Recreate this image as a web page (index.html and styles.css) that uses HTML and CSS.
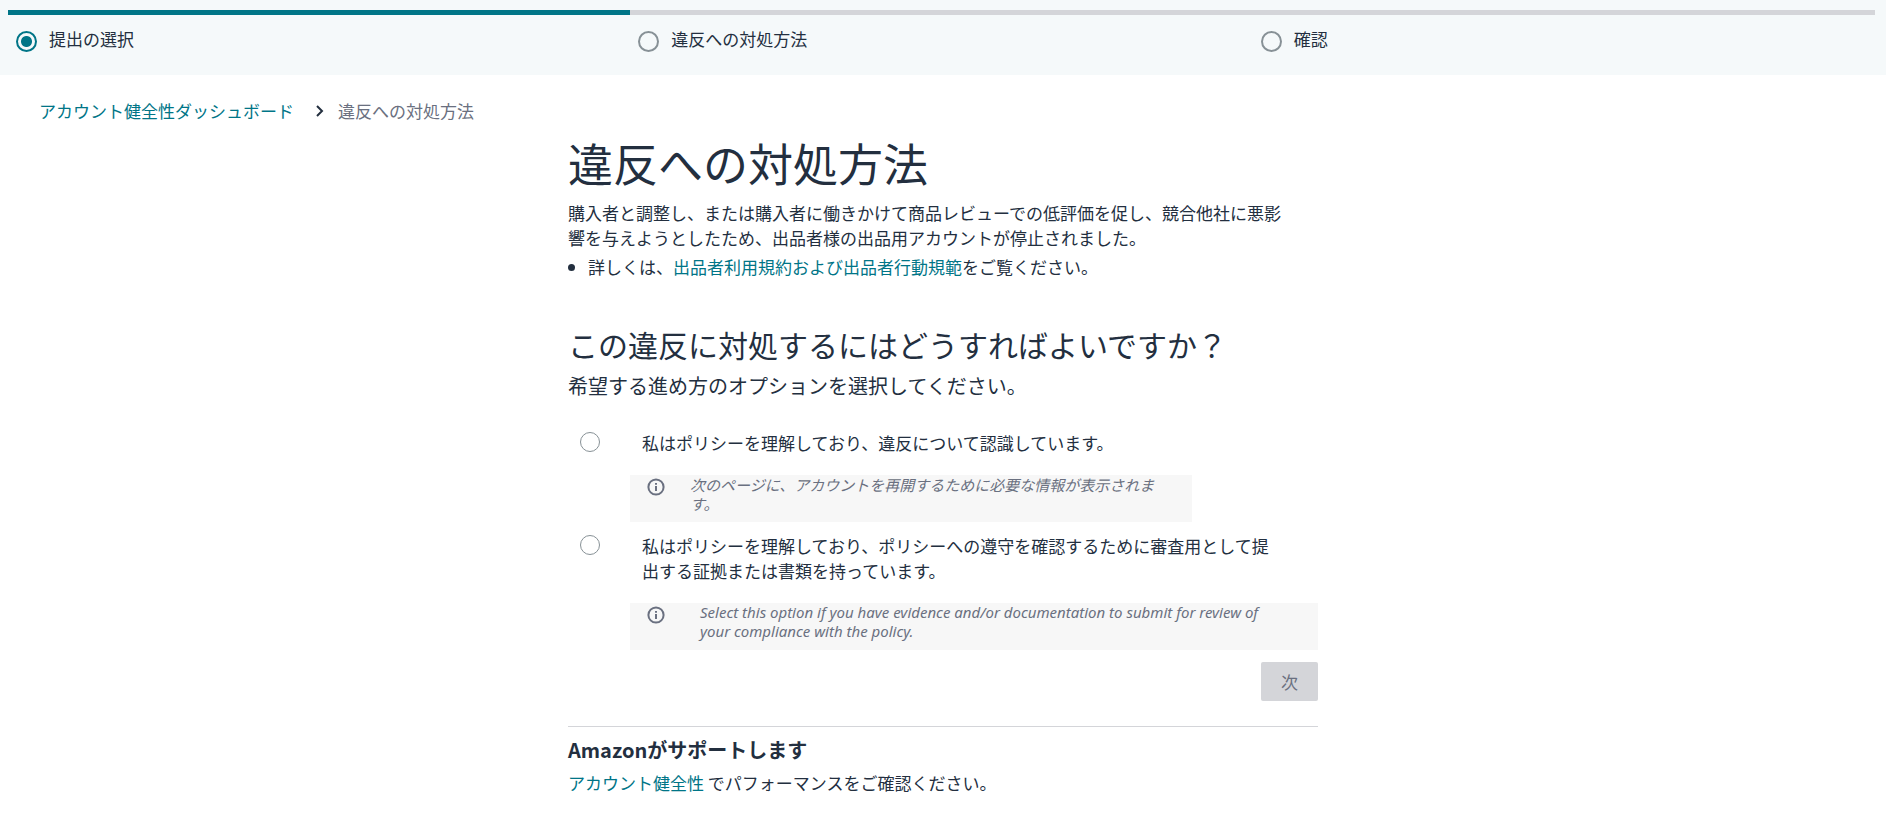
FILE: index.html
```
<!DOCTYPE html>
<html lang="ja">
<head>
<meta charset="utf-8">
<title>違反への対処方法</title>
<link rel="stylesheet" href="styles.css">
</head>
<body>
<header class="progress">
  <ol class="steps">
    <li class="step step-active"><span class="step-dot"></span><span>提出の選択</span></li>
    <li class="step"><span class="step-dot"></span><span>違反への対処方法</span></li>
    <li class="step"><span class="step-dot"></span><span>確認</span></li>
  </ol>
</header>
<nav class="breadcrumb" aria-label="breadcrumb">
  <a href="#">アカウント健全性ダッシュボード</a>
  <svg class="chevron" viewBox="0 0 10 14" aria-hidden="true"><path d="M2 2l5 5-5 5"/></svg>
  <span class="current">違反への対処方法</span>
</nav>
<main class="content">
  <h1>違反への対処方法</h1>
  <p class="reason">購入者と調整し、または購入者に働きかけて商品レビューでの低評価を促し、競合他社に悪影響を与えようとしたため、出品者様の出品用アカウントが停止されました。</p>
  <ul class="details">
    <li>詳しくは、<a href="#">出品者利用規約および出品者行動規範</a>をご覧ください。</li>
  </ul>
  <h2>この違反に対処するにはどうすればよいですか？</h2>
  <p class="lead">希望する進め方のオプションを選択してください。</p>
  <form class="options">
    <div class="option">
      <input class="radio" type="radio" name="plan" id="plan-ack">
      <label for="plan-ack">私はポリシーを理解しており、違反について認識しています。</label>
    </div>
    <div class="note note-short">
      <svg class="info" viewBox="0 0 18 18" aria-hidden="true"><circle cx="9" cy="9" r="7.6"/><path d="M9 8v5M9 5v1.7"/></svg>
      <p>次のページに、アカウントを再開するために必要な情報が表示されます。</p>
    </div>
    <div class="option">
      <input class="radio" type="radio" name="plan" id="plan-evidence">
      <label for="plan-evidence">私はポリシーを理解しており、ポリシーへの遵守を確認するために審査用として提出する証拠または書類を持っています。</label>
    </div>
    <div class="note note-wide">
      <svg class="info" viewBox="0 0 18 18" aria-hidden="true"><circle cx="9" cy="9" r="7.6"/><path d="M9 8v5M9 5v1.7"/></svg>
      <p lang="en">Select this option if you have evidence and/or documentation to submit for review of your compliance with the policy.</p>
    </div>
    <div class="actions"><button type="submit" class="next" disabled>次</button></div>
  </form>
  <footer class="support">
    <h3>Amazonがサポートします</h3>
    <p><a href="#">アカウント健全性</a> でパフォーマンスをご確認ください。</p>
  </footer>
</main>
</body>
</html>
```
FILE: styles.css
```
* { box-sizing: border-box; }
body {
  margin: 0;
  background: #fff;
  color: #232f3f;
  font: 17px/25px "Noto Sans CJK JP", sans-serif;
}
h1, h2, h3, p, ul, ol { margin: 0; padding: 0; font-weight: 400; }
a { color: #007587; text-decoration: none; }

.progress { padding: 10px 11px 23px 8px; background: #f5f9fa; }
.steps { display: grid; grid-template-columns: repeat(3, 1fr); list-style: none; }
.step {
  display: flex;
  gap: 12px;
  padding: 11px 8px 0;
  border-top: 5px solid #d4d5d9;
}
.step-active { border-top-color: #007587; }
.step-dot {
  width: 21px;
  height: 21px;
  margin-top: 5px;
  border: 2px solid #879196;
  border-radius: 50%;
}
.step-active .step-dot {
  border-color: #007587;
  background: radial-gradient(circle, #007587 5px, transparent 6px);
}

.breadcrumb { display: flex; align-items: center; padding: 23px 39px 0; }
.chevron { width: 10px; height: 14px; margin: 0 13px 0 21px; fill: none; stroke: #232f3f; stroke-width: 2; }
.current { color: #6a7080; }

.content { width: 100%; max-width: 750px; margin: 0 auto; padding: 7px 0 20px; }
h1 { font-size: 45px; line-height: 66px; }
.reason { padding-right: 32px; margin-top: 4px; }
.details { padding-left: 20px; margin-top: 4px; }
h2 { margin-top: 43px; font-size: 30px; line-height: 44px; }
.lead { margin-top: 5px; font-size: 20px; line-height: 30px; }

.options { padding-top: 29px; }
.option { display: flex; gap: 42px; padding: 0 38px 0 12px; }
.radio {
  flex: none;
  appearance: none;
  width: 20px;
  height: 20px;
  margin: 2px 0 0;
  border: 1px solid #879196;
  border-radius: 50%;
  background: #fff;
}
.radio:checked { border: 6px solid #007587; }
.note {
  display: flex;
  margin: 20px 0 11px 62px;
  padding: 0 30px 9px 17px;
  background: #f7f7f7;
  color: #6a7080;
  font-size: 15px;
  font-style: italic;
  line-height: 19px;
}
.note-short { gap: 25px; margin-right: 126px; }
.note-wide { gap: 35px; font-family: "Noto Sans", sans-serif; }
.info { flex: none; width: 18px; height: 18px; margin-top: 3px; fill: none; stroke: #6a7080; stroke-width: 2; }

.actions { display: flex; justify-content: flex-end; padding-top: 1px; }
.next {
  height: 39px;
  padding: 0 20px;
  border: 0;
  border-radius: 2px;
  background: #d4d5d9;
  color: #6a7080;
  font: inherit;
}
.support { margin-top: 25px; padding-top: 8px; border-top: 1px solid #d4d5d9; }
h3 { font-size: 20px; line-height: 30px; font-weight: 700; }
.support p { margin-top: 5px; }
```
